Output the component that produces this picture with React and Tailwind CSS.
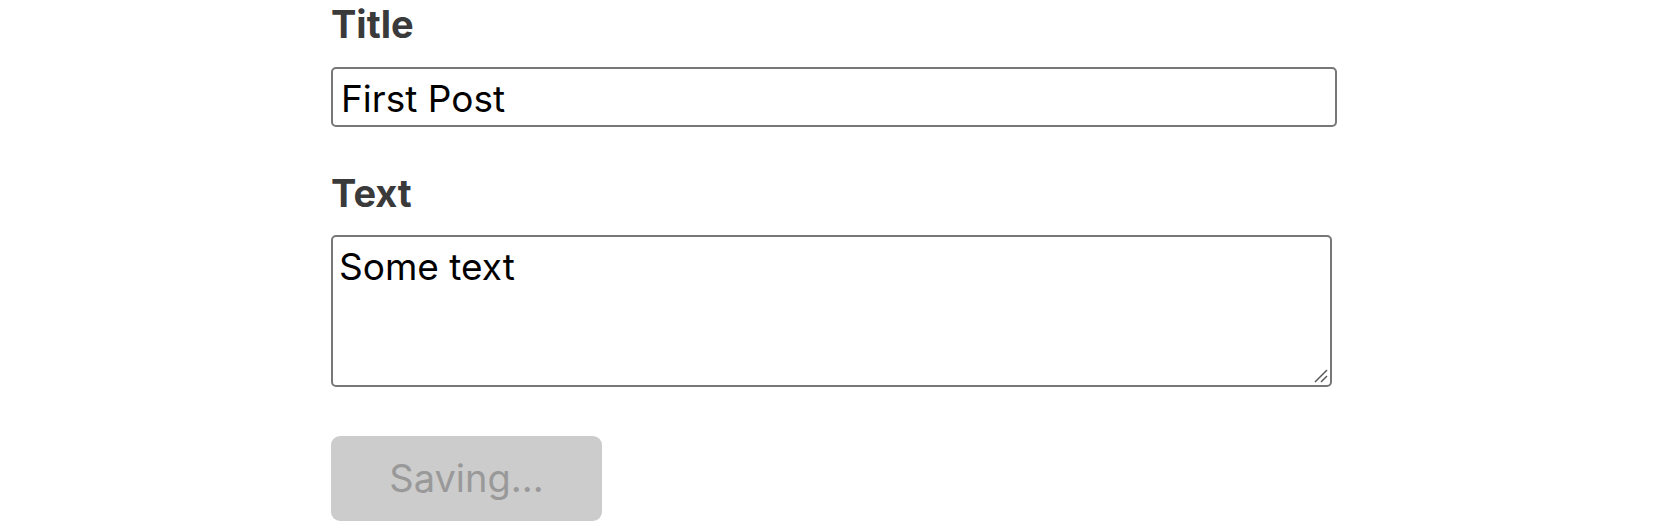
import React from 'react';

const EditPostForm = () => {
  const post = { title: 'First Post', content: 'Some text' };

  return (
    <div className="min-h-[527px] bg-white font-['Inter',sans-serif]">
      <form className="ml-[331px] w-[1006px] pt-[1px]" onSubmit={(e) => e.preventDefault()}>
        <label htmlFor="postTitle" className="block text-[38px] leading-[46px] font-bold text-[#3a3a3a]">
          Title
        </label>
        <input
          id="postTitle"
          type="text"
          defaultValue={post.title}
          className="mt-[20px] block w-[1006px] h-[60px] px-[8px] pt-[3px] text-[37px] text-black border-2 border-[#777] rounded-[5px] outline-none"
        />

        <label htmlFor="postContent" className="mt-[43px] block text-[38px] leading-[46px] font-bold text-[#3a3a3a]">
          Text
        </label>
        <div className="relative mt-[19px] w-[1001px]">
          <textarea
            id="postContent"
            defaultValue={post.content}
            className="block w-[1001px] h-[152px] px-[6px] pt-[8px] pb-[4px] text-[37px] leading-[44px] text-black border-2 border-[#777] rounded-[5px] outline-none resize-none"
          />
          <svg className="absolute right-[4px] bottom-[4px]" width="14" height="14" viewBox="0 0 14 14">
            <line x1="1" y1="13" x2="13" y2="1" stroke="#555" strokeWidth="1.5" />
            <line x1="7" y1="13" x2="13" y2="7" stroke="#555" strokeWidth="1.5" />
          </svg>
        </div>

        <button
          type="button"
          disabled
          className="mt-[49px] block w-[271px] h-[85px] rounded-[9px] bg-[#cccccc] text-[38px] text-[#999999]"
        >
          Saving...
        </button>
      </form>
    </div>
  );
};

export default EditPostForm;
